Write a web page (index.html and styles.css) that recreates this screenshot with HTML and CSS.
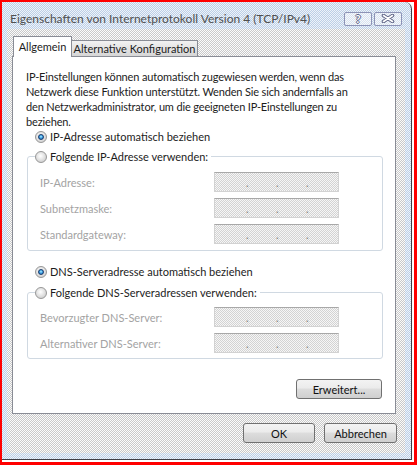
FILE: index.html
```html
<!DOCTYPE html>
<html lang="de">
<head>
    <meta charset="UTF-8">
    <title>Eigenschaften von Internetprotokoll Version 4 (TCP/IPv4)</title>
    <link rel="stylesheet" href="styles.css">
</head>
<body>
    <div class="window">
        <div class="titlebar">
            <span class="title">Eigenschaften von Internetprotokoll Version 4 (TCP/IPv4)</span>
            <div class="caption-buttons">
                <span class="cap-btn help">?</span>
                <span class="cap-btn close">
                    <svg width="14" height="9" viewBox="0 0 14 9">
                        <path d="M2.5 1.5 L11.5 7.5 M11.5 1.5 L2.5 7.5" stroke="#5d6386" stroke-width="3.6" stroke-linecap="round"/>
                        <path d="M2.5 1.5 L11.5 7.5 M11.5 1.5 L2.5 7.5" stroke="#fff" stroke-width="1.6" stroke-linecap="round"/>
                    </svg>
                </span>
            </div>
        </div>

        <div class="client">
            <div class="tabs">
                <span class="tab active">Allgemein</span>
                <span class="tab">Alternative Konfiguration</span>
            </div>

            <div class="panel">
                <p class="intro">IP-Einstellungen können automatisch zugewiesen werden, wenn das<br>
                Netzwerk diese Funktion unterstützt. Wenden Sie sich andernfalls an<br>
                den Netzwerkadministrator, um die geeigneten IP-Einstellungen zu<br>
                beziehen.</p>

                <div class="option"><span class="radio checked"></span>IP-Adresse automatisch beziehen</div>

                <fieldset class="group">
                    <legend class="option"><span class="radio"></span>Folgende IP-Adresse verwenden:</legend>
                    <div class="field"><span class="field-label">IP-Adresse:</span><span class="ip-box"><span>.</span><span>.</span><span>.</span></span></div>
                    <div class="field"><span class="field-label">Subnetzmaske:</span><span class="ip-box"><span>.</span><span>.</span><span>.</span></span></div>
                    <div class="field"><span class="field-label">Standardgateway:</span><span class="ip-box"><span>.</span><span>.</span><span>.</span></span></div>
                </fieldset>

                <div class="option option-dns"><span class="radio checked"></span>DNS-Serveradresse automatisch beziehen</div>

                <fieldset class="group group-dns">
                    <legend class="option"><span class="radio"></span>Folgende DNS-Serveradressen verwenden:</legend>
                    <div class="field"><span class="field-label">Bevorzugter DNS-Server:</span><span class="ip-box"><span>.</span><span>.</span><span>.</span></span></div>
                    <div class="field"><span class="field-label">Alternativer DNS-Server:</span><span class="ip-box"><span>.</span><span>.</span><span>.</span></span></div>
                </fieldset>

                <div class="panel-actions">
                    <button class="btn btn-advanced">Erweitert...</button>
                </div>
            </div>

            <div class="dialog-actions">
                <button class="btn btn-ok">OK</button>
                <button class="btn btn-cancel">Abbrechen</button>
            </div>
        </div>
    </div>
</body>
</html>
```
FILE: styles.css
```css
* {
    box-sizing: border-box;
}
html {
    background: #fff;
}
body {
    margin: 0;
    width: 417px;
    height: 465px;
    border: 2px solid #ff0000;
    border-right-width: 3px;
    border-bottom-width: 3px;
    background: #fff;
    font-family: Lato, "Noto Sans", sans-serif;
    font-size: 11px;
    color: #1c1c1c;
}
.window {
    width: 410px;
    height: 458px;
    padding: 6px 6px 6px 5px;
    border-right: 1px solid #3f3f46;
    border-bottom: 1px solid #3f3f46;
    border-top-right-radius: 7px;
    background: conic-gradient(#bccfe6 25%, #eef3fa 0 50%, #bccfe6 0 75%, #eef3fa 0) 0 0 / 2px 2px;
    display: flex;
    flex-direction: column;
}
.titlebar {
    height: 21px;
    display: flex;
    align-items: center;
    justify-content: space-between;
    padding-left: 3px;
}
.title {
    font-size: 12px;
    color: #505050;
    white-space: nowrap;
}
.caption-buttons {
    display: flex;
    gap: 2px;
    margin-right: 3px;
}
.cap-btn {
    width: 28px;
    height: 14px;
    border: 1px solid #8d93b6;
    border-radius: 2px;
    background: conic-gradient(#d8e2f0 25%, #f7f9fc 0 50%, #d8e2f0 0 75%, #f7f9fc 0) 0 0 / 2px 2px;
    display: flex;
    align-items: center;
    justify-content: center;
}
.help {
    font-size: 11px;
    font-weight: bold;
    line-height: 1;
    color: #fff;
    text-shadow: 1px 0 #5d6386, -1px 0 #5d6386, 0 1px #5d6386, 0 -1px #5d6386;
}
.client {
    flex: 1;
    display: flex;
    flex-direction: column;
    padding: 7px 9px 10px 5px;
    background: conic-gradient(#c9c9c9 25%, #fbfbfb 0 50%, #c9c9c9 0 75%, #fbfbfb 0) 0 0 / 2px 2px;
}
.tabs {
    height: 20px;
    display: flex;
    align-items: flex-end;
    padding-left: 1px;
}
.tab {
    height: 16px;
    width: 127px;
    margin-left: -1px;
    border: 1px solid #898c95;
    border-bottom: none;
    background: linear-gradient(#f2f2f2, #d6d6d6);
    display: flex;
    align-items: center;
    justify-content: center;
    white-space: nowrap;
    color: #1c1c1c;
}
.tab.active {
    position: relative;
    z-index: 1;
    width: 59px;
    height: 21px;
    margin-left: 0;
    margin-bottom: -1px;
    background: #fff;
    padding-bottom: 1px;
}
.panel {
    flex: 1;
    display: flex;
    flex-direction: column;
    padding: 12px 12px 0 13px;
    background: #fff;
    border: 1px solid #898c95;
}
.intro {
    margin: 0;
    line-height: 15px;
    letter-spacing: -0.15px;
    white-space: nowrap;
}
.option {
    height: 15px;
    display: flex;
    align-items: center;
    gap: 3px;
    padding-left: 9px;
    white-space: nowrap;
}
.radio {
    position: relative;
    width: 12px;
    height: 12px;
    border-radius: 50%;
    border: 1px solid #979797;
    background: radial-gradient(circle at 45% 40%, #ffffff 0, #e4e4e4 45%, #c2c2c2 100%);
    flex: none;
}
.radio.checked::after {
    content: "";
    position: absolute;
    inset: 2px;
    border-radius: 50%;
    border: 1px solid #183a6c;
    background: radial-gradient(circle at 50% 40%, #b8f0ff 0, #3fa6e8 45%, #1a5aa8 100%);
}
.group {
    margin: 5px 0 0 1px;
    padding: 8px 43px 6px 12px;
    border: 1px solid #d0d9e2;
    border-radius: 3px;
    display: flex;
    flex-direction: column;
    gap: 6px;
}
.group legend {
    margin-left: -5px;
    padding: 0 3px 0 0;
    background: #fff;
}
.group-dns {
    margin-top: 6px;
    padding-top: 7px;
    padding-bottom: 5px;
}
.option-dns {
    margin-top: 13px;
}
.field {
    height: 20px;
    display: flex;
    align-items: center;
    justify-content: space-between;
}
.field-label {
    color: #a3a3a3;
}
.ip-box {
    width: 125px;
    height: 20px;
    border: 1px solid #d2d2d2;
    border-top-color: #a8a8a8;
    background: conic-gradient(#d3d3d3 25%, #f6f6f6 0 50%, #d3d3d3 0 75%, #f6f6f6 0) 0 0 / 2px 2px;
    display: flex;
    align-items: center;
    gap: 27px;
    padding-left: 31px;
    color: #7d7d7d;
}
.ip-box span {
    width: 3px;
}
.panel-actions {
    display: flex;
    justify-content: flex-end;
    margin-top: 20px;
    padding-right: 1px;
}
.btn {
    height: 20px;
    padding: 0;
    border: 1px solid #707070;
    border-radius: 3px;
    background: linear-gradient(#f3f3f3 0, #ebebeb 45%, #dddddd 50%, #cfcfcf 100%);
    font-family: Lato, "Noto Sans", sans-serif;
    font-size: 11px;
    color: #111;
}
.btn-advanced {
    width: 86px;
}
.dialog-actions {
    display: flex;
    justify-content: flex-end;
    gap: 9px;
    margin-top: 9px;
    margin-right: -1px;
}
.btn-ok {
    width: 72px;
}
.btn-cancel {
    width: 73px;
}
```
